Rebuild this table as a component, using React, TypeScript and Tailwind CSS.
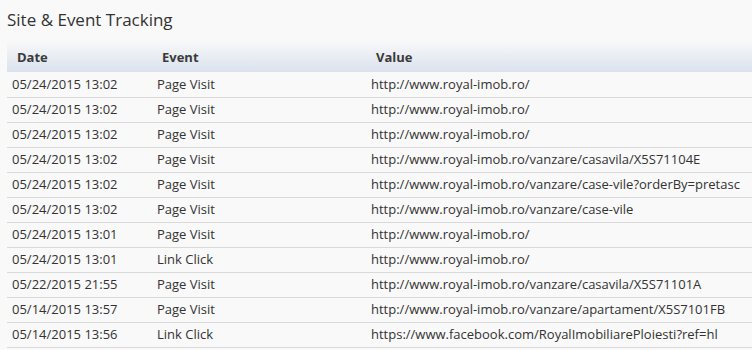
import React from 'react';

const rows = [
  { date: '05/24/2015 13:02', event: 'Page Visit', value: 'http://www.royal-imob.ro/' },
  { date: '05/24/2015 13:02', event: 'Page Visit', value: 'http://www.royal-imob.ro/' },
  { date: '05/24/2015 13:02', event: 'Page Visit', value: 'http://www.royal-imob.ro/' },
  { date: '05/24/2015 13:02', event: 'Page Visit', value: 'http://www.royal-imob.ro/vanzare/casavila/X5S71104E' },
  { date: '05/24/2015 13:02', event: 'Page Visit', value: 'http://www.royal-imob.ro/vanzare/case-vile?orderBy=pretasc' },
  { date: '05/24/2015 13:02', event: 'Page Visit', value: 'http://www.royal-imob.ro/vanzare/case-vile' },
  { date: '05/24/2015 13:01', event: 'Page Visit', value: 'http://www.royal-imob.ro/' },
  { date: '05/24/2015 13:01', event: 'Link Click', value: 'http://www.royal-imob.ro/' },
  { date: '05/22/2015 21:55', event: 'Page Visit', value: 'http://www.royal-imob.ro/vanzare/casavila/X5S71101A' },
  { date: '05/14/2015 13:57', event: 'Page Visit', value: 'http://www.royal-imob.ro/vanzare/apartament/X5S7101FB' },
  { date: '05/14/2015 13:56', event: 'Link Click', value: 'https://www.facebook.com/RoyalImobiliarePloiesti?ref=hl' },
];

const App: React.FC = () => {
  return (
    <div className="min-h-[350px] bg-[#f9f9f9] pl-[7px] pt-[8px] text-[#333] font-['Open_Sans',sans-serif]">
      <h1 className="text-[17px] leading-[24px] font-normal mb-[8px]">Site &amp; Event Tracking</h1>

      <table className="w-full table-fixed border-collapse text-[13px]">
        <colgroup>
          <col className="w-[145px]" />
          <col className="w-[214px]" />
          <col />
        </colgroup>
        <thead>
          <tr className="bg-gradient-to-b from-[#f9f9f9] to-[#dae2ed]">
            <th className="h-[32px] pt-[3px] text-left font-bold pl-[10px] text-[#3a3a3a]">Date</th>
            <th className="h-[32px] pt-[3px] text-left font-bold pl-[10px] text-[#3a3a3a]">Event</th>
            <th className="h-[32px] pt-[3px] text-left font-bold pl-[10px] text-[#3a3a3a]">Value</th>
          </tr>
        </thead>
        <tbody>
          {rows.map((r, i) => (
            <tr key={i} className="border-b border-[#d9d9d9]">
              <td className="h-[25px] pl-[5px] whitespace-nowrap">{r.date}</td>
              <td className="h-[25px] pl-[5px] whitespace-nowrap">{r.event}</td>
              <td className="h-[25px] pl-[5px] whitespace-nowrap">{r.value}</td>
            </tr>
          ))}
        </tbody>
      </table>
    </div>
  );
};

export default App;
